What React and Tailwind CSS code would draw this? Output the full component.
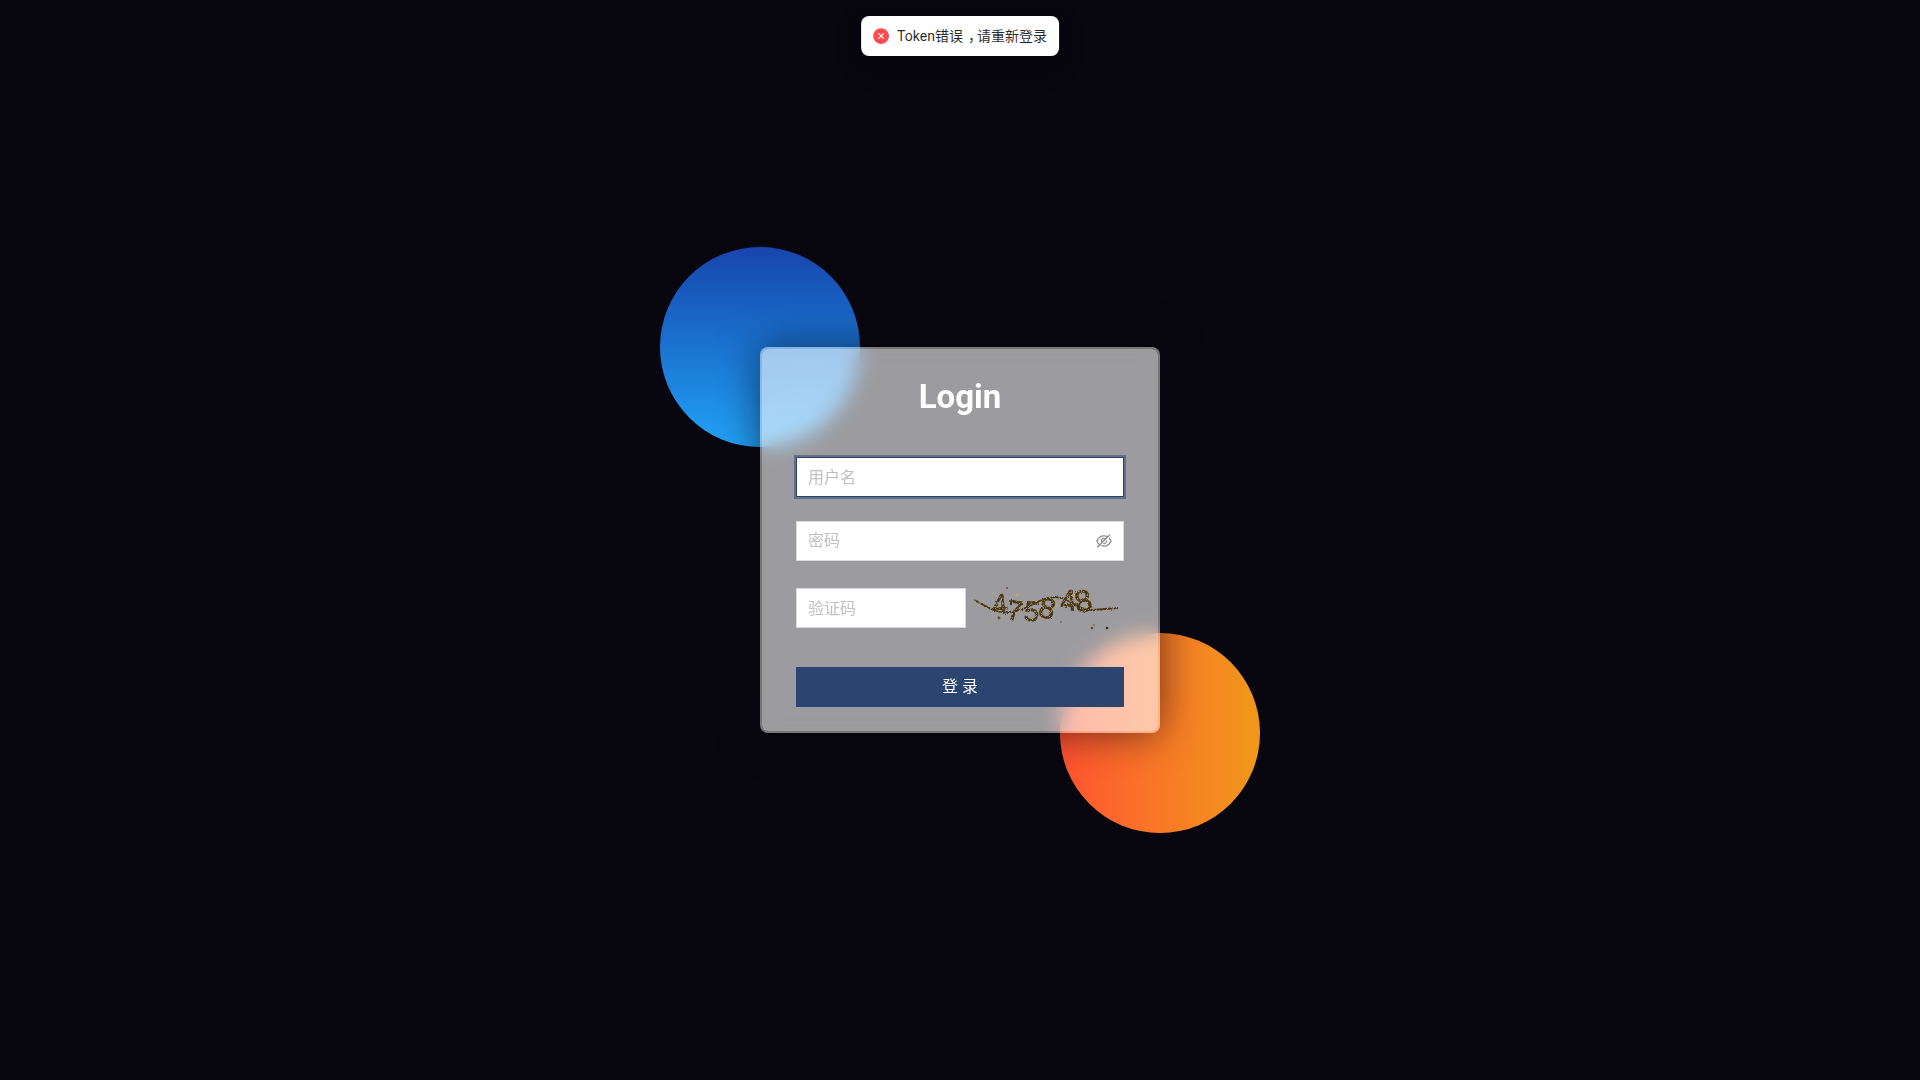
import React from "react";
import { AiFillCloseCircle, AiOutlineEyeInvisible } from "react-icons/ai";

function Captcha() {
  const digits = [
    ["4", 22, 29, -6, 28],
    ["7", 37, 35, 8, 28],
    ["5", 54, 36, 6, 28],
    ["8", 69, 33, 14, 29],
    ["4", 90, 26, -4, 30],
    ["8", 105, 27, -12, 31],
  ];
  const dots = [
    [23, 8, 1, "#c2a36b"], [47, 10, 1.6, "#c2a36b"], [37, 3, 0.9, "#6b4a16"], [19, 33, 0.8, "#c2a36b"],
    [29, 33, 1.4, "#6b4a16"], [41, 19, 1.2, "#4a3008"], [87, 20, 1.6, "#c2a36b"], [91, 37, 0.8, "#6b4a16"],
    [115, 33, 0.8, "#a89070"], [124, 33, 0.8, "#c2a36b"], [122, 43, 1.3, "#6b4a16"], [124, 40, 0.9, "#8a6a30"],
    [137, 43, 1.2, "#3c2506"], [131, 3, 0.6, "#c2a36b"], [104, 10, 1.2, "#c2a36b"],
  ];
  return (
    <svg className="w-[150px] h-[46px] shrink-0 overflow-visible" viewBox="0 0 150 46">
      <defs>
        <filter id="rough" x="-10%" y="-10%" width="120%" height="120%">
          <feTurbulence type="fractalNoise" baseFrequency="0.8" numOctaves="2" seed="4" result="n" />
          <feDisplacementMap in="SourceGraphic" in2="n" scale="2.5" result="d" />
          <feColorMatrix
            in="n"
            type="matrix"
            values="0 0 0 0 0  0 0 0 0 0  0 0 0 0 0  0 6 0 0 -1.7"
            result="m"
          />
          <feComposite in="d" in2="m" operator="in" />
        </filter>
      </defs>
      <g filter="url(#rough)">
        <path
          d="M4 15L23 25C35 30 50 26 62 20C75 12 85 10 95 14C105 20 112 25 122 25L148 23"
          fill="none"
          stroke="#4f350a"
          strokeWidth="1.8"
        />
        {digits.map(([d, x, y, r, s], i) => (
          <text
            key={i}
            x={x}
            y={y}
            transform={`rotate(${r} ${x + 7} ${y - 9})`}
            fontFamily="'Liberation Sans', sans-serif"
            fontSize={s}
            fill="#4f350a"
            stroke="#4f350a"
            strokeWidth="0.7"
          >
            {d}
          </text>
        ))}
      </g>
      {dots.map(([x, y, r, c], i) => (
        <circle key={i} cx={x} cy={y} r={r} fill={c} />
      ))}
    </svg>
  );
}

export default function App() {
  return (
    <div className="relative w-full h-screen overflow-hidden bg-[#080710] flex items-center justify-center font-['Roboto','Noto_Sans_CJK_SC',sans-serif]">
      <div className="absolute top-4 left-1/2 -translate-x-1/2 z-20 h-10 px-3 flex items-center gap-2 rounded-lg bg-white text-sm text-black/85 whitespace-nowrap shadow-[0_6px_16px_0_rgba(0,0,0,0.08),0_3px_6px_-4px_rgba(0,0,0,0.12),0_9px_28px_8px_rgba(0,0,0,0.05)]">
        <AiFillCloseCircle className="w-[18px] h-[18px] -mx-px text-[#ff4d4f]" />
        <span>
          Token错误<span className="ml-[5px] tracking-[-5px]">，</span>请重新登录
        </span>
      </div>

      <div className="relative w-[400px] h-[386px]">
        <div className="absolute -left-[100px] -top-[100px] w-[200px] h-[200px] rounded-full bg-gradient-to-b from-[#1845ad] to-[#23a2f6]" />
        <div className="absolute -right-[100px] -bottom-[100px] w-[200px] h-[200px] rounded-full bg-gradient-to-r from-[#ff512f] to-[#f09819]" />

        <form className="relative h-full box-border rounded-lg border-2 border-white/45 bg-white/60 bg-clip-padding backdrop-blur-[10px] shadow-[0_0_40px_rgba(8,7,16,0.6)] px-[34px] pt-[27px]">
          <h1 className="text-[33px] leading-[42px] font-bold text-white text-center mb-[39px]">Login</h1>

          <input
            placeholder="用户名"
            className="block w-full h-10 box-border px-[11px] text-base bg-white border border-[#2c4470] shadow-[0_0_0_2px_rgba(44,68,112,0.5)] outline-none placeholder:text-[#bfbfbf]"
          />

          <div className="mt-6 h-10 box-border flex items-center px-[11px] bg-white border border-[#d9d9d9]">
            <input
              placeholder="密码"
              className="flex-1 min-w-0 text-base bg-transparent outline-none placeholder:text-[#bfbfbf]"
            />
            <AiOutlineEyeInvisible className="w-[18px] h-[18px] text-black/45 ml-1 -mr-px" />
          </div>

          <div className="mt-[27px] h-10 flex items-center gap-1">
            <input
              placeholder="验证码"
              className="w-[170px] h-10 box-border px-[11px] text-base bg-white border border-[#d9d9d9] outline-none placeholder:text-[#bfbfbf]"
            />
            <Captcha />
          </div>

          <button
            type="button"
            className="mt-[39px] block w-full h-10 bg-[#2c4470] text-white text-base"
          >
            登 录
          </button>
        </form>
      </div>
    </div>
  );
}
